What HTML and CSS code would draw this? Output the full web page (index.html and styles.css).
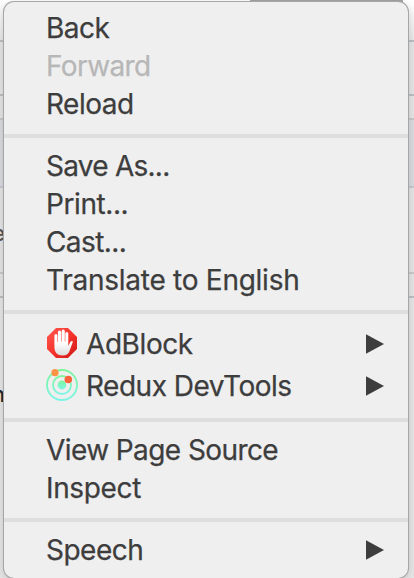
FILE: index.html
```html
<!DOCTYPE html>
<html lang="en">
<head>
<meta charset="utf-8">
<title>Context menu</title>
<link rel="stylesheet" href="styles.css">
</head>
<body>
<div class="page">
  <div class="band band-top"></div>
  <div class="band band-a"></div>
  <div class="band band-b"></div>
  <div class="band band-c"></div>
  <div class="band band-d"><span class="peek peek-e">e</span></div>
  <div class="band band-e"></div>
  <div class="band band-f"><span class="peek peek-n">n</span></div>
</div>
<div class="edge"></div>
<nav class="menu">
  <div class="item"><span class="label back">Back</span></div>
  <div class="item disabled"><span class="label forward">Forward</span></div>
  <div class="item"><span class="label reload">Reload</span></div>
  <div class="separator"></div>
  <div class="item"><span class="label save">Save As...</span></div>
  <div class="item"><span class="label print">Print...</span></div>
  <div class="item"><span class="label cast">Cast...</span></div>
  <div class="item"><span class="label translate">Translate to English</span></div>
  <div class="separator"></div>
  <div class="item tall">
    <svg class="icon" viewBox="0 0 32 32">
      <defs><linearGradient id="red" x1="0" y1="0" x2="1" y2="1"><stop offset="0" stop-color="#ff5a50"/><stop offset=".5" stop-color="#f5342d"/><stop offset="1" stop-color="#cf1715"/></linearGradient>
      <linearGradient id="palm" x1="0" y1="0" x2="0" y2="1"><stop offset=".5" stop-color="#fff"/><stop offset="1" stop-color="#dcdcdc"/></linearGradient></defs>
      <path d="M10 1h12l9 9v12l-9 9H10l-9-9V10z" fill="url(#red)"/>
      <path d="M8.4 18V8.4a1.5 1.5 0 0 1 3 0V15h.5V5a1.6 1.6 0 0 1 3.2 0v9.5h.5V4.2a1.6 1.6 0 0 1 3.2 0v10.3h.5V6.4a1.5 1.5 0 0 1 3 0V19l2-4c.8-1.5 2.8-1.2 2.4.2l-3.3 9c-1.2 3-3.1 4.3-6.6 4.3-5.5 0-8.4-3.3-8.4-8.5z" fill="url(#palm)"/>
    </svg>
    <span class="label adblock">AdBlock</span><svg class="arrow" viewBox="0 0 18 20"><path d="M0 .3v19.4L18 10z"/></svg>
  </div>
  <div class="item tall">
    <svg class="icon" viewBox="0 0 32 32">
      <defs><linearGradient id="mint" x1="0" y1="0" x2="0" y2="1"><stop offset="0" stop-color="#7df59a"/><stop offset="1" stop-color="#7df5e6"/></linearGradient></defs>
      <g fill="none" stroke="url(#mint)" stroke-width="1.9"><circle cx="16" cy="16" r="15"/><circle cx="16" cy="16" r="9"/></g>
      <circle cx="16" cy="16" r="4.4" fill="url(#mint)"/>
      <circle cx="9" cy="3.7" r="3.6" fill="#fb9347"/><circle cx="22.3" cy="10.5" r="3.8" fill="#f9623b"/>
    </svg>
    <span class="label redux">Redux DevTools</span><svg class="arrow" viewBox="0 0 18 20"><path d="M0 .3v19.4L18 10z"/></svg>
  </div>
  <div class="separator"></div>
  <div class="item"><span class="label source">View Page Source</span></div>
  <div class="item"><span class="label inspect">Inspect</span></div>
  <div class="separator"></div>
  <div class="item"><span class="label speech">Speech</span><svg class="arrow" viewBox="0 0 18 20"><path d="M0 .3v19.4L18 10z"/></svg></div>
</nav>
</body>
</html>
```
FILE: styles.css
```css
* { box-sizing: border-box; }
html, body { height: 100%; margin: 0; overflow: hidden; }
body { position: relative; font-family: Inter, "Liberation Sans", sans-serif; background: #e5e5e5; }

.page { display: flex; flex-direction: column; height: 578px; }
.band { flex: none; border-bottom: 2px solid #bbbec2; background: #e4e4e5; }
.band-top { height: 42px; background: linear-gradient(#fff, #e6e6e6); }
.band-a { height: 54px; }
.band-b { height: 24px; border-color: #c5c6c7; }
.band-c { height: 68px; background: #d9dadd; border-color: #c5c8cf; }
.band-d { height: 86px; border-color: #c8c8ca; }
.band-e { height: 24px; }
.band-f { height: 280px; border: 0; background: #e5e5e5; }
.peek { display: block; width: 5px; overflow: hidden; direction: rtl; color: #24282d; font-weight: 500; }
.peek-e { padding-top: 34px; font-size: 21px; line-height: 24px; color: #555; }
.peek-n { padding-top: 84px; font-size: 21px; line-height: 26px; }
.edge { position: absolute; top: 0; left: 250px; width: 153px; height: 2px; background: #a0a4a5; }

.menu {
  position: absolute; top: 2px; left: 4px; width: 404px; height: 576px;
  padding-top: 7px; border-radius: 10px; overflow: hidden;
  background: #efefef; color: #3d3d3d;
  box-shadow: 0 0 0 1px #a6a6a6, 0 2px 8px rgba(0, 0, 0, .18);
}
.item { display: flex; align-items: center; height: 38px; padding: 0 24px 0 42px; font-size: 28px; line-height: 38px; white-space: nowrap; }
.tall { height: 42px; }
.disabled { color: #b7b7b7; }
.separator { height: 4px; margin: 11px 0 9px; background: #dedede; }
.icon { flex: none; width: 32px; height: 32px; margin: 0 8px 2px 0; }
.arrow { flex: none; width: 18px; height: 20px; margin-left: auto; fill: #3d3d3d; }

.label { -webkit-text-stroke: .25px currentColor; letter-spacing: -.5px; }
.forward, .cast { letter-spacing: -.6px; }
.save { letter-spacing: -.75px; }
.print, .adblock { letter-spacing: -.42px; }
.translate { letter-spacing: -.26px; }
.source { letter-spacing: -.58px; }
.inspect { letter-spacing: -.35px; }
```
